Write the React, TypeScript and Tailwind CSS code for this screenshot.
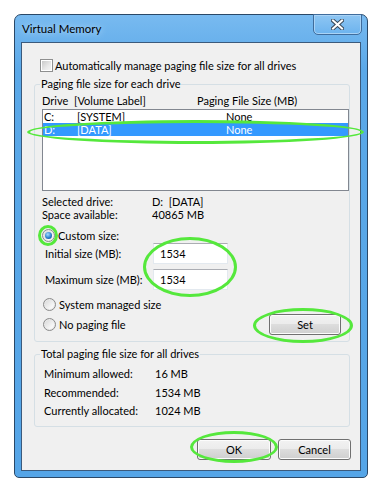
import type { ReactNode } from "react";

const font = "font-['Lato',sans-serif]";

function Radio({ checked }: { checked?: boolean }) {
  return (
    <span className="flex h-[13px] w-[13px] shrink-0 items-center justify-center rounded-full border border-[#8a8a8a] bg-[linear-gradient(135deg,#d4d4d4,#f7f7f7_70%,#ffffff)] shadow-[inset_0_0_0_1px_#e8e8e8]">
      {checked && (
        <span className="h-[7px] w-[7px] rounded-full bg-[radial-gradient(circle_at_40%_35%,#a6dcff,#2b7fd0_55%,#0b3c78)]" />
      )}
    </span>
  );
}

function Checkbox() {
  return (
    <span className="flex h-[13px] w-[13px] shrink-0 items-center justify-center border border-[#8e8f8f] bg-white">
      <span className="h-[9px] w-[9px] bg-[linear-gradient(135deg,#c9c9c9,#e8e8e8_60%,#f4f4f4)]" />
    </span>
  );
}

function Button({ children, className = "" }: { children: ReactNode; className?: string }) {
  return (
    <div
      className={
        "flex h-[21px] items-center justify-center rounded-[3px] border border-[#707070] bg-[linear-gradient(#f2f2f2,#ebebeb_50%,#dddddd_50%,#cfcfcf)] text-black shadow-[inset_0_0_0_1px_#fcfcfc] " +
        className
      }
    >
      {children}
    </div>
  );
}

function Group({ label, className = "", children }: { label: string; className?: string; children: ReactNode }) {
  return (
    <div className={"relative rounded-[3px] border border-[#d5dfe5] " + className}>
      <span className="absolute -top-[9px] left-[5px] bg-[#f0f0f0] px-[1px] leading-[15px]">{label}</span>
      {children}
    </div>
  );
}

function TextBox({ value }: { value: string }) {
  return (
    <div className="flex h-[21px] w-[75px] items-center border border-[#e3e9ef] border-t-[#abadb3] bg-white pl-[6px]">
      {value}
    </div>
  );
}

// rings drawn on top of the screenshot
function Ring({ className }: { className: string }) {
  return <div className={"pointer-events-none absolute rounded-[50%] border-[3px] border-[#55e83c] " + className} />;
}

export default function App() {
  return (
    <div className={`min-h-[496px] whitespace-nowrap bg-white pl-[14px] pt-[14px] text-[11px] leading-[13px] text-black ${font}`}>
      <div className="relative flex h-[464px] w-[354px] flex-col rounded-t-[7px] rounded-b-[5px] border border-[#2a4867] bg-[linear-gradient(#78baf0,#5aa8e8_12%,#55a5e7)] px-[6px] pb-[6px]">
        {/* title bar */}
        <div className="flex h-[27px] shrink-0 items-center pl-[1px] text-[11.5px] text-black [text-shadow:0_0_6px_#cfe6fb]">
          Virtual Memory
        </div>
        <div className="absolute -top-[1px] right-[5px] flex h-[21px] w-[49px] items-center justify-center rounded-b-[5px] border border-[#3f6c9c] bg-[linear-gradient(#8ec6f3,#6cb3ee)] shadow-[inset_0_0_0_1px_#a9d3f6]">
          <svg width="13" height="11" viewBox="0 0 13 11">
            <path d="M2 1.5 L11 9.5 M11 1.5 L2 9.5" stroke="#3b4a5a" strokeWidth="4" strokeLinecap="square" />
            <path d="M2 1.5 L11 9.5 M11 1.5 L2 9.5" stroke="#ffffff" strokeWidth="2" strokeLinecap="square" />
          </svg>
        </div>

        {/* client area */}
        <div className="flex flex-1 flex-col border border-[#3b5a7c] bg-[#f0f0f0]">
          <div className="ml-[18px] mt-[16px] flex h-[13px] items-center gap-[2px]">
            <Checkbox />
            <span>Automatically manage paging file size for all drives</span>
          </div>

          <Group label="Paging file size for each drive" className="ml-[12px] mt-[12px] w-[316px] pb-[6px]">
            <div className="ml-[7px] mt-[9px] flex h-[13px] items-center">
              <span className="w-[32px]">Drive</span>
              <span className="w-[123px]">[Volume Label]</span>
              <span>Paging File Size (MB)</span>
            </div>
            <div className="ml-[7px] mt-[2px] h-[82px] border border-[#828790] bg-white">
              <div className="flex h-[13px] items-center pl-[1px]">
                <span className="w-[33px]">C:</span>
                <span className="w-[149px]">[SYSTEM]</span>
                <span>None</span>
              </div>
              <div className="flex h-[13px] items-center bg-[#3399ff] pl-[1px] text-white">
                <span className="w-[33px]">D:</span>
                <span className="w-[149px]">[DATA]</span>
                <span>None</span>
              </div>
            </div>
            <div className="ml-[7px] mt-[4px] flex h-[13px] items-center">
              <span className="w-[110px]">Selected drive:</span>
              <span>D:&nbsp;&nbsp;[DATA]</span>
            </div>
            <div className="ml-[7px] flex h-[13px] items-center">
              <span className="w-[110px]">Space available:</span>
              <span>40865 MB</span>
            </div>
            <div className="ml-[7px] mt-[7px] flex h-[14px] items-center gap-[3px]">
              <Radio checked />
              <span>Custom size:</span>
            </div>
            <div className="ml-[10px] mt-[1px] flex h-[21px] items-center">
              <span className="w-[108px]">Initial size (MB):</span>
              <TextBox value="1534" />
            </div>
            <div className="ml-[10px] mt-[5px] flex h-[21px] items-center">
              <span className="w-[108px]">Maximum size (MB):</span>
              <TextBox value="1534" />
            </div>
            <div className="ml-[8px] mt-[8px] flex h-[13px] items-center gap-[3px]">
              <Radio />
              <span>System managed size</span>
            </div>
            <div className="ml-[8px] mt-[3px] flex h-[21px] items-center gap-[3px]">
              <Radio />
              <span>No paging file</span>
              <Button className="ml-auto mr-[8px] w-[72px]">Set</Button>
            </div>
          </Group>

          <Group label="Total paging file size for all drives" className="ml-[12px] mt-[12px] w-[316px] pb-[9px]">
            <div className="ml-[9px] mt-[12px] flex h-[13px] items-center">
              <span className="w-[111px]">Minimum allowed:</span>
              <span>16 MB</span>
            </div>
            <div className="ml-[9px] mt-[6px] flex h-[13px] items-center">
              <span className="w-[111px]">Recommended:</span>
              <span>1534 MB</span>
            </div>
            <div className="ml-[9px] mt-[5px] flex h-[13px] items-center">
              <span className="w-[111px]">Currently allocated:</span>
              <span>1024 MB</span>
            </div>
          </Group>

          <div className="mt-[12px] flex justify-end gap-[7px] pr-[9px]">
            <Button className="w-[74px]">OK</Button>
            <Button className="w-[73px]">Cancel</Button>
          </div>
        </div>

        <Ring className="left-[12px] top-[105px] h-[24px] w-[337px]" />
        <Ring className="left-[23px] top-[210px] h-[21px] w-[20px]" />
        <Ring className="left-[128px] top-[222px] h-[60px] w-[94px]" />
        <Ring className="left-[238px] top-[293px] h-[35px] w-[100px]" />
        <Ring className="left-[175px] top-[416px] h-[32px] w-[88px]" />
      </div>
    </div>
  );
}
